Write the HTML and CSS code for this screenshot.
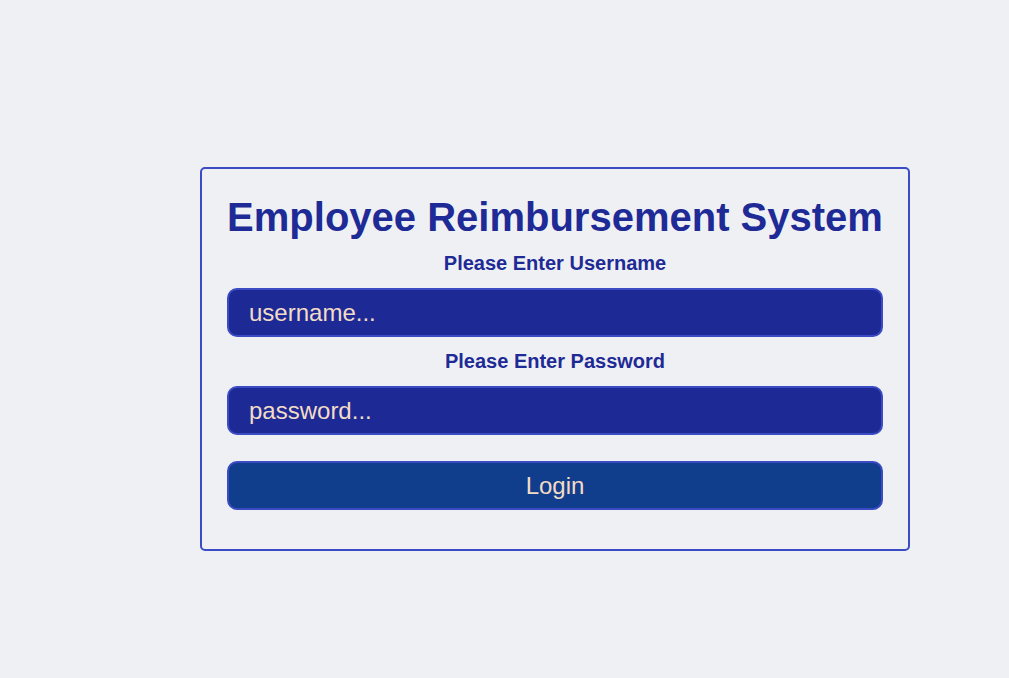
FILE: index.html
```html
<!DOCTYPE html>
<html>
<head>
<meta charset="utf-8">
<link rel="stylesheet" href="styles.css">
</head>
<body>
<main class="page">
  <form class="card">
    <h1 class="title">Employee Reimbursement System</h1>
    <label class="label" for="u">Please Enter Username</label>
    <input class="field" id="u" type="text" placeholder="username...">
    <label class="label" for="p">Please Enter Password</label>
    <input class="field" id="p" type="password" placeholder="password...">
    <button class="btn" type="button">Login</button>
  </form>
</main>
</body>
</html>
```
FILE: styles.css
```css
html, body {
  margin: 0;
  padding: 0;
  background: #eff0f3;
  font-family: "Liberation Sans", Arial, sans-serif;
}
.page {
  padding: 167px 0 0 200px;
}
.card {
  box-sizing: border-box;
  width: 710px;
  border: 2px solid #3a4bc4;
  border-radius: 5px;
  padding: 26px 25px 39px 25px;
  display: flex;
  flex-direction: column;
  align-items: stretch;
}
.title {
  margin: 0;
  text-align: center;
  color: #1e2a96;
  font-size: 40px;
  font-weight: bold;
  line-height: 44px;
  white-space: nowrap;
}
.label {
  text-align: center;
  color: #1e2a96;
  font-size: 20px;
  font-weight: bold;
  line-height: 24px;
  margin: 12px 0 13px;
}
.field {
  box-sizing: border-box;
  height: 49px;
  border: 2px solid #3a4bc4;
  border-radius: 10px;
  background: #1d2a96;
  color: #f3dcc6;
  font-family: "Liberation Sans", Arial, sans-serif;
  font-size: 24px;
  padding: 0 20px;
  margin: 0;
  outline: none;
}
.field::placeholder {
  color: #f3dcc6;
  opacity: 1;
}
.btn {
  box-sizing: border-box;
  height: 49px;
  margin: 26px 0 0;
  border: 2px solid #3a4bc4;
  border-radius: 10px;
  background: #113e8c;
  color: #f3dcc6;
  font-family: "Liberation Sans", Arial, sans-serif;
  font-size: 24px;
}
```
